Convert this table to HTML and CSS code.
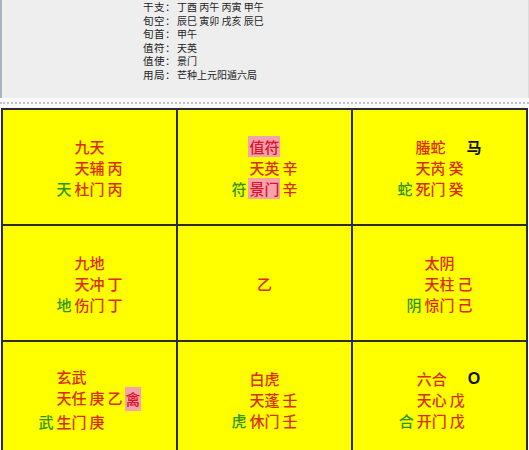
FILE: index.html
```html
<!DOCTYPE html>
<html lang="zh-CN">
<head>
<meta charset="utf-8">
<title>奇门遁甲</title>
<link rel="stylesheet" href="styles.css">
</head>
<body>
<div class="panel">
  <div class="info">
    <div class="row"><span class="lbl">干支：</span><span class="val">丁酉 丙午 丙寅 甲午</span></div>
    <div class="row"><span class="lbl">旬空：</span><span class="val">辰巳 寅卯 戌亥 辰巳</span></div>
    <div class="row"><span class="lbl">旬首：</span><span class="val">甲午</span></div>
    <div class="row"><span class="lbl">值符：</span><span class="val">天英</span></div>
    <div class="row"><span class="lbl">值使：</span><span class="val">景门</span></div>
    <div class="row"><span class="lbl">用局：</span><span class="val">芒种上元阳遁六局</span></div>
  </div>
</div>
<div class="sep"><div class="dots"></div></div>
<div class="board">
  <div class="cell">
    <div class="q c3">
      <span></span><span>九天</span><span></span>
      <span></span><span>天辅</span><span>丙</span>
      <span class="g">天</span><span>杜门</span><span>丙</span>
    </div>
  </div>
  <div class="cell">
    <div class="q c3">
      <span></span><span class="hl">值符</span><span></span>
      <span></span><span>天英</span><span>辛</span>
      <span class="g">符</span><span class="hl">景门</span><span>辛</span>
    </div>
  </div>
  <div class="cell">
    <div class="q c4">
      <span></span><span>螣蛇</span><span></span><span class="k">马</span>
      <span></span><span>天芮</span><span>癸</span><span></span>
      <span class="g">蛇</span><span>死门</span><span>癸</span><span></span>
    </div>
  </div>
  <div class="cell">
    <div class="q c3">
      <span></span><span>九地</span><span></span>
      <span></span><span>天冲</span><span>丁</span>
      <span class="g">地</span><span>伤门</span><span>丁</span>
    </div>
  </div>
  <div class="cell">
    <div class="q c1"><span>乙</span></div>
  </div>
  <div class="cell">
    <div class="q c3">
      <span></span><span>太阴</span><span></span>
      <span></span><span>天柱</span><span>己</span>
      <span class="g">阴</span><span>惊门</span><span>己</span>
    </div>
  </div>
  <div class="cell">
    <div class="q c5">
      <span></span><span>玄武</span><span></span><span></span><span></span>
      <span></span><span>天任</span><span>庚</span><span>乙</span><span class="hl tall">禽</span>
      <span class="g">武</span><span>生门</span><span>庚</span><span></span><span></span>
    </div>
  </div>
  <div class="cell">
    <div class="q c3">
      <span></span><span>白虎</span><span></span>
      <span></span><span>天蓬</span><span>壬</span>
      <span class="g">虎</span><span>休门</span><span>壬</span>
    </div>
  </div>
  <div class="cell">
    <div class="q c4">
      <span></span><span>六合</span><span></span><span class="k ring">O</span>
      <span></span><span>天心</span><span>戊</span><span></span>
      <span class="g">合</span><span>开门</span><span>戊</span><span></span>
    </div>
  </div>
</div>
</body>
</html>
```

FILE: styles.css
```css
html, body {
  margin: 0;
  padding: 0;
  background: #fbfbfb;
  overflow: hidden;
}

body {
  width: 529px;
  height: 450px;
  font-family: "Noto Sans CJK SC", "Noto Sans", sans-serif;
}

.panel {
  height: 98px;
  background: #eeeeee;
  border-left: 2px solid #aab1c0;
  border-right: 1px solid #dcdcdc;
  box-sizing: border-box;
  padding-left: 141px;
}

.info {
  font-size: 10px;
  line-height: 13.6px;
  color: #222;
}

.row {
  display: flex;
  height: 13.6px;
  white-space: nowrap;
}

.lbl {
  flex: none;
  width: 34px;
  font-size: 10.5px;
  letter-spacing: 0.5px;
  white-space: nowrap;
}

.val {
  white-space: pre;
}

.sep {
  height: 10px;
  box-sizing: border-box;
  padding-top: 4px;
  background: #fbfafc;
}

.dots {
  border-top: 2px dotted #bcc3cf;
}

.board {
  margin-left: 1px;
  width: 527px;
  box-sizing: border-box;
  border: 2px solid #2b2b2b;
  background: #2b2b2b;
  display: grid;
  grid-template-columns: repeat(3, 173px);
  grid-auto-rows: 114px;
  gap: 2px;
}

.cell {
  background: #ffff00;
  display: flex;
  align-items: center;
  justify-content: center;
}

.q {
  display: grid;
  column-gap: 3px;
  font-size: 15px;
  line-height: 21px;
  font-weight: 500;
  color: #dc2c00;
}

.c1 { grid-template-columns: auto; }
.c3 { grid-template-columns: auto auto auto; }
.c4 { grid-template-columns: auto auto auto auto; }
.c5 { grid-template-columns: auto auto auto auto auto; }

.g {
  color: #2c9410;
}

.hl {
  background: #f5a3ab;
  color: #e0102a;
  margin-left: -1px;
  padding-left: 1px;
}

.tall {
  padding-top: 1px;
  padding-bottom: 2px;
  line-height: 21px;
}

.k {
  color: #111;
  font-weight: bold;
}

.ring {
  font-family: "Liberation Sans", Arial, sans-serif;
  font-size: 16px;
  line-height: 21px;
}
```
